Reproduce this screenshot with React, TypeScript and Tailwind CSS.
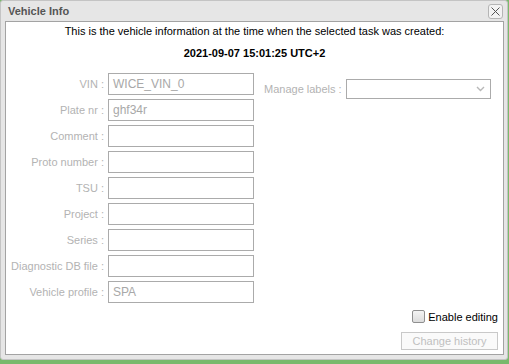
/**
 * VehicleInfoDialog — read-only vehicle snapshot shown for a task.
 */

const fields = [
  { label: 'VIN', value: 'WICE_VIN_0' },
  { label: 'Plate nr', value: 'ghf34r' },
  { label: 'Comment', value: '' },
  { label: 'Proto number', value: '' },
  { label: 'TSU', value: '' },
  { label: 'Project', value: '' },
  { label: 'Series', value: '' },
  { label: 'Diagnostic DB file', value: '' },
  { label: 'Vehicle profile', value: 'SPA' },
];

export default function App() {
  return (
    <div className="h-[364px] w-[509px] overflow-hidden bg-[#79b96c] font-['Liberation_Sans',Arial,sans-serif]">
      <div className="flex h-[360px] w-[508px] flex-col rounded-[3px] border border-[#c4c4c4] bg-[#e6e6e6]">
        {/* Title bar */}
        <div className="flex h-[20px] items-center justify-between pl-[7px] pr-[4px]">
          <span className="text-[11px] font-bold text-[#555]">Vehicle Info</span>
          <button
            type="button"
            aria-label="Close"
            className="mt-[1px] flex h-[15px] w-[15px] items-center justify-center rounded-[3px] border border-[#b5b5b5] bg-[#f3f3f3]"
          >
            <svg className="h-[9px] w-[9px]" viewBox="0 0 9 9" fill="none" stroke="#555" strokeWidth={1}>
              <path d="M0.5 0.5 8.5 8.5M8.5 0.5 0.5 8.5" />
            </svg>
          </button>
        </div>

        {/* Content */}
        <div className="ml-[4px] flex h-[334px] w-[499px] flex-col border border-[#a3a3a3] bg-white">
          <p className="pt-[3px] text-center text-[11px] leading-[13px] text-black">
            This is the vehicle information at the time when the selected task was created:
          </p>
          <p className="mt-[9px] text-center text-[11px] font-bold leading-[13px] text-black">
            2021-09-07 15:01:25 UTC+2
          </p>

          <div className="mt-[13px] flex">
            {/* Left column */}
            <div className="flex flex-col gap-[4px]">
              {fields.map((f) => (
                <div key={f.label} className="flex items-center">
                  <span className="w-[98px] text-right text-[11px] text-[#b3b3b3]">{f.label} :</span>
                  <div className="ml-[4px] flex h-[22px] w-[146px] items-center border border-[#ababab] pl-[4px] text-[12px] text-[#a8a8a8]">
                    {f.value}
                  </div>
                </div>
              ))}
            </div>

            {/* Right column */}
            <div className="ml-[10px] mt-[6px] flex h-[20px] items-center self-start">
              <span className="text-[11px] text-[#b3b3b3]">Manage labels :</span>
              <div className="ml-[4px] flex h-[20px] w-[145px] items-center justify-end border border-[#ababab] pr-[5px]">
                <svg className="h-[6px] w-[9px]" viewBox="0 0 9 6" fill="none" stroke="#b8b8b8" strokeWidth={1.4}>
                  <path d="M1 1 4.5 4.5 8 1" />
                </svg>
              </div>
            </div>
          </div>

          {/* Footer */}
          <div className="mt-auto flex flex-col items-end pb-[4px] pr-[5px]">
            <label className="flex items-center gap-[3px]">
              <span className="h-[13px] w-[13px] rounded-[2px] border border-[#8f8f8f] bg-gradient-to-b from-[#f4f4f4] to-[#dcdcdc]" />
              <span className="text-[11px] text-black">Enable editing</span>
            </label>
            <button
              type="button"
              disabled
              className="mt-[7px] h-[18px] w-[97px] border border-[#c9c9c9] bg-[#fafafa] text-[11px] text-[#c0c0c0]"
            >
              Change history
            </button>
          </div>
        </div>
      </div>
    </div>
  );
}
